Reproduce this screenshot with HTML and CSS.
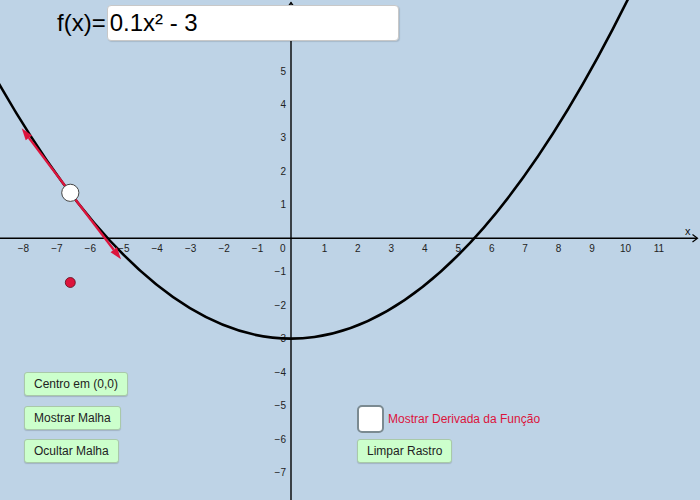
FILE: index.html
```html
<!DOCTYPE html>
<html lang="pt">
<head>
<meta charset="utf-8">
<title>Derivada</title>
<link rel="stylesheet" href="styles.css">
</head>
<body>
<div class="applet">
  <svg class="canvas" width="700" height="500" viewBox="0 0 700 500" xmlns="http://www.w3.org/2000/svg">
    <g class="axes">
      <line x1="0" y1="238.3" x2="697" y2="238.3"/>
      <polyline class="arrow" points="692.5,234.6 697.5,238.3 692.5,242"/>
      <line x1="291" y1="500" x2="291" y2="2.5"/>
      <polyline class="arrow" points="287.3,7.5 291,2.5 294.7,7.5"/>
    </g>
    <g class="labels xl">
      <text x="23.4" y="251.7">−8</text>
      <text x="56.85" y="251.7">−7</text>
      <text x="90.3" y="251.7">−6</text>
      <text x="123.75" y="251.7">−5</text>
      <text x="157.2" y="251.7">−4</text>
      <text x="190.65" y="251.7">−3</text>
      <text x="224.1" y="251.7">−2</text>
      <text x="257.55" y="251.7">−1</text>
      <text x="282.7" y="251.7">0</text>
      <text x="324.45" y="251.7">1</text>
      <text x="357.9" y="251.7">2</text>
      <text x="391.35" y="251.7">3</text>
      <text x="424.8" y="251.7">4</text>
      <text x="458.25" y="251.7">5</text>
      <text x="491.7" y="251.7">6</text>
      <text x="525.15" y="251.7">7</text>
      <text x="558.6" y="251.7">8</text>
      <text x="592.05" y="251.7">9</text>
      <text x="625.5" y="251.7">10</text>
      <text x="658.95" y="251.7">11</text>
    </g>
    <g class="labels yl">
      <text x="286" y="41.1">6</text>
      <text x="286" y="74.55">5</text>
      <text x="286" y="108">4</text>
      <text x="286" y="141.45">3</text>
      <text x="286" y="174.9">2</text>
      <text x="286" y="208.35">1</text>
      <text x="286" y="275.25">−1</text>
      <text x="286" y="308.7">−2</text>
      <text x="286" y="342.15">−3</text>
      <text x="286" y="375.6">−4</text>
      <text x="286" y="409.05">−5</text>
      <text x="286" y="442.5">−6</text>
      <text x="286" y="475.95">−7</text>
    </g>
    <text class="axisname" x="685" y="234.5">x</text>
    <path class="curve" d="M -3.36 79.61 Q 314.42 638.9 632.19 -9.37"/>
    <g class="vector">
      <line x1="70.3" y1="192.8" x2="28.92" y2="137.88"/>
      <polygon points="21.7,128.3 32.11,135.47 25.73,140.29"/>
      <line x1="70.3" y1="192.8" x2="113.72" y2="249.75"/>
      <polygon points="121,259.3 116.9,247.32 110.54,252.18"/>
    </g>
    <circle class="pt-white" cx="70.3" cy="192.8" r="8.6"/>
    <circle class="pt-red" cx="70.3" cy="282.5" r="5"/>
  </svg>

  <div class="func">
    <span class="func-label">f(x)=</span>
    <div class="func-input">0.1x² - 3</div>
  </div>

  <div class="btn-col left-col">
    <button class="btn">Centro em (0,0)</button>
    <button class="btn">Mostrar Malha</button>
    <button class="btn">Ocultar Malha</button>
  </div>

  <div class="btn-col right-col">
    <label class="check-row">
      <span class="checkbox"></span>
      <span class="check-label">Mostrar Derivada da Função</span>
    </label>
    <button class="btn">Limpar Rastro</button>
  </div>
</div>
</body>
</html>
```

FILE: styles.css
```css
html, body {
  margin: 0;
  padding: 0;
}
body {
  width: 700px;
  height: 500px;
  overflow: hidden;
  font-family: "Liberation Sans", Arial, sans-serif;
}
.applet {
  position: relative;
  width: 700px;
  height: 500px;
  background: #bed3e6;
  overflow: hidden;
}
.canvas {
  position: absolute;
  left: 0;
  top: 0;
  display: block;
}
.axes line {
  stroke: #000;
  stroke-width: 1.4;
}
.axes .arrow {
  fill: none;
  stroke: #000;
  stroke-width: 1.2;
}
.labels text {
  font-family: "Liberation Sans", Arial, sans-serif;
  font-size: 10px;
  fill: #222;
}
.xl text {
  text-anchor: middle;
}
.yl text {
  text-anchor: end;
}
.axisname {
  font-family: "Liberation Sans", Arial, sans-serif;
  font-size: 11px;
  fill: #111;
}
.curve {
  fill: none;
  stroke: #000;
  stroke-width: 2.6;
}
.vector line {
  stroke: #dc143c;
  stroke-width: 2.4;
}
.vector polygon {
  fill: #dc143c;
}
.pt-white {
  fill: #fff;
  stroke: #444;
  stroke-width: 1;
}
.pt-red {
  fill: #dc143c;
  stroke: #5a0a18;
  stroke-width: 0.8;
}

.func {
  position: absolute;
  left: 57px;
  top: 5px;
  display: flex;
  align-items: center;
  gap: 1px;
}
.func-label {
  font-size: 24px;
  color: #000;
}
.func-input {
  box-sizing: border-box;
  width: 292px;
  height: 36px;
  background: #fff;
  border: 1px solid #c8c8c8;
  border-radius: 4px;
  box-shadow: 1px 1px 1px rgba(0,0,0,0.12);
  padding: 0 2px;
  font-size: 24px;
  line-height: 34px;
  color: #000;
}

.btn-col {
  position: absolute;
  display: flex;
  flex-direction: column;
  align-items: flex-start;
}
.left-col {
  left: 24px;
  top: 372px;
  gap: 9.5px;
}
.right-col {
  left: 357px;
  top: 405px;
  gap: 5.5px;
}
.btn {
  box-sizing: border-box;
  height: 24px;
  padding: 0 9px;
  margin: 0;
  background: #ccffcc;
  border: 1px solid #a9c9a9;
  border-radius: 3px;
  box-shadow: 0 1px 1px rgba(0,0,0,0.15);
  font-family: "Liberation Sans", Arial, sans-serif;
  font-size: 12px;
  color: #222;
  line-height: 22px;
}
.check-row {
  display: flex;
  align-items: center;
  gap: 4px;
}
.checkbox {
  box-sizing: border-box;
  width: 27px;
  height: 28px;
  background: #fff;
  border: 2px solid #7b8a91;
  border-radius: 5px;
}
.check-label {
  font-size: 12px;
  color: #dc143c;
}
```
